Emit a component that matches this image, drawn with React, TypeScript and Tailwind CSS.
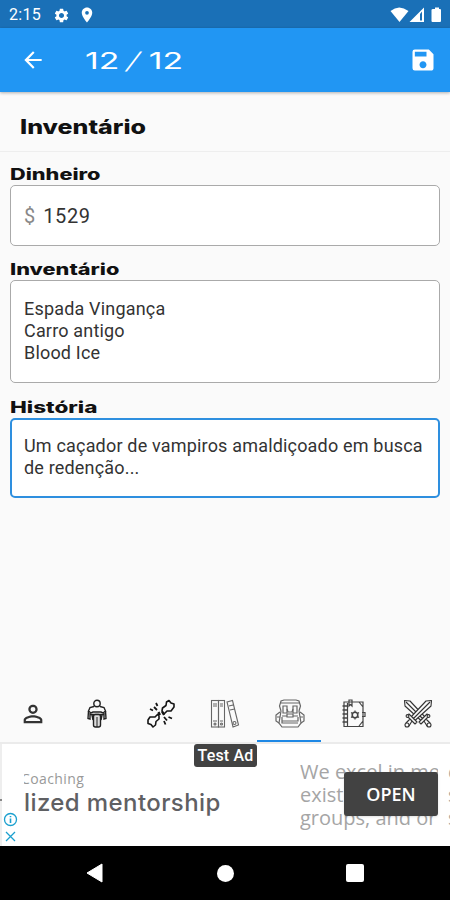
import type { ReactNode } from "react";
import { MdArrowBack, MdLocationOn, MdPersonOutline, MdSave, MdSettings } from "react-icons/md";

interface FieldProps {
  label: string;
  labelClass: string;
  boxClass: string;
  children: ReactNode;
}

const StatusBar = () => (
  <div className="flex h-7 shrink-0 items-center bg-[#1a70b7] pt-0.5 pr-[7px] pl-[9px] text-white">
    <span className="w-[44px] font-['Roboto',sans-serif] text-[16px] tracking-[0.3px]">2:15</span>
    <MdSettings className="size-[17px]" />
    <MdLocationOn className="ml-2 size-[18px]" />
    <svg className="ml-auto" width="54" height="16" viewBox="0 0 54 16" fill="white">
      <path d="M1.5 4Q10 -3 19.5 4L10.5 15Z" />
      <path fillRule="evenodd" d="M35 .5V15H20.5ZM31 7V13.5H33V4.5Z" />
      <path d="M44 2H46V.5H50V2H51Q52 2 52 3V14Q52 15 51 15H43.5Q42.5 15 42.5 14V3Q42.5 2 44 2Z" />
    </svg>
  </div>
);

const AppBar = () => (
  <header className="z-10 flex h-16 shrink-0 items-center bg-[#2196f3] pr-[13px] pl-5 text-white shadow-[0_1px_3px_rgba(0,0,0,0.3)]">
    <MdArrowBack className="size-[26px]" />
    <h1 className="mt-0.5 ml-[39px] origin-left scale-x-[1.47] font-['Inter',sans-serif] text-[23px] whitespace-nowrap">
      12<span className="mr-1 ml-1.5 inline-block origin-center -skew-x-[14deg] font-light">/</span>
      <span className="ml-0.5">12</span>
    </h1>
    <MdSave className="ml-auto size-[28px]" />
  </header>
);

const Field = ({ label, labelClass, boxClass, children }: FieldProps) => (
  <section>
    <h3
      className={`w-fit origin-left font-['Inter',sans-serif] text-[15.5px] leading-5 font-extrabold whitespace-nowrap text-[#111] ${labelClass}`}
    >
      {label}
    </h3>
    <div className={`rounded-[5px] bg-white font-['Roboto',sans-serif] leading-[22px] text-[#333] ${boxClass}`}>
      {children}
    </div>
  </section>
);

const RiderIcon = () => (
  <svg width="30" height="30" viewBox="0 0 30 30" fill="none" stroke="#222" strokeWidth="1.4">
    <circle cx="15" cy="4.5" r="3.2" />
    <path d="M12 7.5L8 8.5L6.5 12L9 14L11 13H19L21 14L23.5 12L22 8.5L18 7.5" />
    <path d="M6.5 12L6 19.5L8 20V14M23.5 12L24 19.5L22 20V14" />
    <path d="M8 15.5H22M10 16L11 21M20 16L19 21" />
    <rect x="11.5" y="15.5" width="7" height="12.5" rx="2" fill="#ddd" />
    <path d="M15 18V28" strokeWidth="1" />
  </svg>
);

const BrokenBoneIcon = () => (
  <svg width="30" height="30" viewBox="0 0 30 30" fill="none" stroke="#151515" strokeWidth="1.6" strokeLinejoin="round">
    <path d="M16 12L16.500 9L20 6.500L20.500 3L23 1.500L25 4L28 5V8L25 12L21 12L18 15Z" />
    <path d="M13 17L13 20L10 22.500L9.500 26L7 28L5 25.500L2 24.500V21L4 18L9 18L12 15Z" />
    <path d="M10 4L11.5 7M4 10L7 11.5M8 8L11 11M18 18L21 21.5M22.5 18L26 19.5M18 22L19.5 25.5" strokeWidth="1.8" />
    <path d="M12.5 13L14 16M16 12.5L18 16" strokeWidth="2.2" />
  </svg>
);

const BindersIcon = () => (
  <svg width="30" height="30" viewBox="0 0 30 30" fill="none" stroke="#666" strokeWidth="1.1">
    <rect x="1.5" y="1.5" width="7" height="26.5" />
    <rect x="8.5" y="1.5" width="6" height="26.5" />
    <path d="M17 3L22.5 1.5L28.5 26L23 28ZM3 5H7M3 7H7M10 5H13M10 7H13M3 22H7M10 22H13M19 7L23 6M20 11L24.5 10" />
    <circle cx="5" cy="25" r="1" />
    <circle cx="11.5" cy="25" r="1" />
    <circle cx="24.5" cy="24" r="1.5" />
  </svg>
);

const BackpackIcon = () => (
  <svg width="30" height="30" viewBox="0 0 30 30" fill="none" stroke="#666" strokeWidth="1.2">
    <path d="M6 12L4.5 7L6 2L9 1H21L24 2L25.5 7L24 12M5 4H25" />
    <path d="M6 12L4 24L7 28H23L26 24L24 12M8 7V14H12V7ZM18 7V14H22V7Z" />
    <path d="M12 10L13 13H17L18 10M7 17H12M18 17H23M12 15H18V18H12ZM7 22H23V18M7 18V24H23" />
    <path d="M5 13L1 16V22L4 24M25 13L29 16V22L26 24M2 18H5M25 18H28" />
  </svg>
);

const SpellBookIcon = () => (
  <svg width="30" height="30" viewBox="0 0 30 30" fill="none" stroke="#444" strokeWidth="1.2">
    <path d="M5 3H24V27.5H5ZM8.5 4V27M10 3V1H13V7L11.5 5.5L10 7ZM20 3L24 8M20 27L24 22M23 13.5H26V17.5H23" />
    <path d="M3.5 7H9M3.5 11H9M3.5 15H9M3.5 19H9M3.5 23H9" strokeWidth="1.5" />
    <circle cx="16" cy="16" r="2.8" strokeWidth="1.6" />
    <path d="M16 11.5V13M16 19V20.5M12 13.5L13.5 14.5M18.5 17.5L20 18.5M12 18.5L13.5 17.5M18.5 14.5L20 13.5" />
  </svg>
);

const SwordsIcon = () => (
  <svg width="30" height="30" viewBox="0 0 30 30" fill="#fafafa" stroke="#333" strokeWidth="1.1" strokeLinejoin="round">
    {["", "translate(30 0) scale(-1 1)"].map((transform) => (
      <g key={transform} transform={transform}>
        <path d="M1.5 1.5L7 2L22 18L18 21.5L2 7Z" />
        <path d="M3 3L20 20M24 15L26 17L18 25L16 23ZM21 22L23 20L27 24L24 27Z" />
        <circle cx="26" cy="26" r="2" />
        <circle cx="25.5" cy="17" r="1.4" />
      </g>
    ))}
  </svg>
);

const tabs: { name: string; icon: ReactNode }[] = [
  { name: "person", icon: <MdPersonOutline className="size-7 text-[#333]" /> },
  { name: "rider", icon: <RiderIcon /> },
  { name: "bone", icon: <BrokenBoneIcon /> },
  { name: "binders", icon: <BindersIcon /> },
  { name: "backpack", icon: <BackpackIcon /> },
  { name: "book", icon: <SpellBookIcon /> },
  { name: "swords", icon: <SwordsIcon /> },
];

const TabBar = () => (
  <nav className="grid h-[58px] shrink-0 grid-cols-7">
    {tabs.map(({ name, icon }) => (
      <div
        key={name}
        className={`flex items-center justify-center border-b-2 pt-1 pl-px ${name === "backpack" ? "border-[#1e88e5]" : "border-transparent"}`}
      >
        {icon}
      </div>
    ))}
  </nav>
);

const AdBanner = () => (
  <div className="relative h-[104px] shrink-0 overflow-hidden border-t-2 border-[#ebebeb] bg-white font-['Open_Sans',sans-serif]">
    <div className="flex h-full">
      <div className="h-full w-0.5 bg-[#eee] pt-[55px]">
        <div className="h-0.5 bg-[#888]" />
      </div>
      <div className="w-[298px] pt-[25px] pl-[22px]">
        <div className="overflow-hidden">
          <p className="-ml-[3px] text-[14px] leading-5 tracking-[0.4px] text-[#999]">Coaching</p>
        </div>
        <p className="font-['Inter',sans-serif] text-[24px] leading-7 font-medium tracking-[0.4px] whitespace-nowrap text-[#5f6063]">
          lized mentorship
        </p>
      </div>
      <p className="w-[138px] overflow-hidden pt-4 text-[20px] leading-[23px] whitespace-nowrap text-[#a5a5a5]">
        We excel in me
        <br />
        existing
        <br />
        groups, and or
      </p>
      <p className="ml-auto w-[2px] overflow-hidden pt-4 text-[20px] leading-[23px] text-[#a5a5a5]">
        c<br />s<br />s
      </p>
    </div>
    <div className="absolute top-0 left-[194px] flex h-[23px] w-[63px] items-center justify-center rounded-[3px] bg-[#424242] font-['Roboto',sans-serif] text-[16px] font-medium tracking-[0.2px] whitespace-nowrap text-white">
      Test Ad
    </div>
    <button className="absolute top-[28px] left-[344px] h-[44px] w-[94px] rounded-[3px] bg-[#424242] text-[18px] font-semibold text-white shadow">
      OPEN
    </button>
    <svg className="absolute top-[68px] left-[3px]" width="15" height="32" viewBox="0 0 15 32" fill="none" stroke="#1ba0cf" strokeWidth="1.3">
      <circle cx="7.5" cy="7.5" r="6" />
      <path d="M7.5 6.5V11M7.5 4V5.3" strokeWidth="1.6" />
      <path d="M3 20L12 29M12 20L3 29" />
    </svg>
  </div>
);

const NavigationBar = () => (
  <div className="flex h-[54px] shrink-0 items-center justify-between bg-black pr-[86px] pl-[86px]">
    <svg width="17" height="20" viewBox="0 0 17 20" fill="white">
      <path d="M1 10L16 1V19Z" stroke="white" strokeLinejoin="round" />
    </svg>
    <div className="ml-px size-[17px] rounded-full bg-white" />
    <div className="size-[18px] rounded-[2px] bg-white" />
  </div>
);

const App = () => (
  <div className="flex h-[900px] w-[450px] flex-col overflow-hidden bg-[#fafafa]">
    <StatusBar />
    <AppBar />
    <div className="flex h-[60px] shrink-0 items-center border-b border-[#eee] pt-2.5 pl-5">
      <h2 className="origin-left scale-x-[1.25] font-['Inter',sans-serif] text-[20px] font-extrabold text-[#111]">
        Inventário
      </h2>
    </div>
    <main className="flex grow flex-col px-2.5 pt-[13px]">
      <Field
        label="Dinheiro"
        labelClass="scale-x-[1.4]"
        boxClass="flex h-[61px] items-center border border-[#aaa] px-[13px] text-[20px]"
      >
        <span className="mr-2 text-[#888]">$</span>
        <span className="tracking-[0.6px]">1529</span>
      </Field>
      <div className="h-[14px]" />
      <Field
        label="Inventário"
        labelClass="scale-x-[1.4]"
        boxClass="h-[103px] border border-[#aaa] px-[13px] pt-[17px] text-[18px] tracking-[0.18px]"
      >
        <p>Espada Vingança</p>
        <p>Carro antigo</p>
        <p>Blood Ice</p>
      </Field>
      <div className="h-[15px]" />
      <Field
        label="História"
        labelClass="scale-x-[1.45]"
        boxClass="h-[80px] border-2 border-[#2e8fdf] px-3 pt-[15px] text-[18px] tracking-[0.18px] whitespace-nowrap"
      >
        <p>Um caçador de vampiros amaldiçoado em busca</p>
        <p>de redenção...</p>
      </Field>
    </main>
    <TabBar />
    <AdBanner />
    <NavigationBar />
  </div>
);

export default App;
